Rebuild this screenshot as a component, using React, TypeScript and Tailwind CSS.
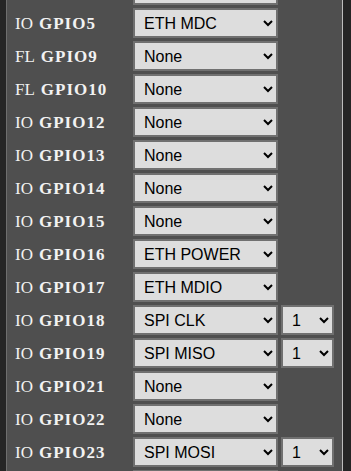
const rows: { type: string; gpio: string; value: string; index?: string; partial?: boolean }[] = [
  { type: "IO", gpio: "GPIO4", value: "None", partial: true },
  { type: "IO", gpio: "GPIO5", value: "ETH MDC" },
  { type: "FL", gpio: "GPIO9", value: "None" },
  { type: "FL", gpio: "GPIO10", value: "None" },
  { type: "IO", gpio: "GPIO12", value: "None" },
  { type: "IO", gpio: "GPIO13", value: "None" },
  { type: "IO", gpio: "GPIO14", value: "None" },
  { type: "IO", gpio: "GPIO15", value: "None" },
  { type: "IO", gpio: "GPIO16", value: "ETH POWER" },
  { type: "IO", gpio: "GPIO17", value: "ETH MDIO" },
  { type: "IO", gpio: "GPIO18", value: "SPI CLK", index: "1" },
  { type: "IO", gpio: "GPIO19", value: "SPI MISO", index: "1" },
  { type: "IO", gpio: "GPIO21", value: "None" },
  { type: "IO", gpio: "GPIO22", value: "None" },
  { type: "IO", gpio: "GPIO23", value: "SPI MOSI", index: "1" },
  { type: "IO", gpio: "GPIO25", value: "None", partial: true },
];

const selectClass =
  "h-[30px] bg-[#dddddd] text-black border-2 border-[#707070] pl-[5px] pr-[2px] text-[16px] leading-none font-['Liberation_Sans',Arial,sans-serif] rounded-none";

export default function App() {
  return (
    <div className="w-[351px] h-[471px] overflow-hidden bg-[#252525] flex">
      <div className="ml-[6px] w-[337px] h-full bg-[#4f4f4f] border-l border-l-[#6e6e6e] border-r border-r-[#bdbdbd] overflow-hidden">
        <div className="mt-[-25px] flex flex-col gap-[3px] pl-[8px]">
          {rows.map((r) => (
            <div key={r.gpio} className="flex items-center h-[30px]">
              <div className="w-[118px] shrink-0 pt-[2px] text-[17px] text-[#f2f2f2] font-['Liberation_Serif','Times_New_Roman',serif] whitespace-nowrap">
                {!r.partial && (
                  <>
                    {r.type}
                    <b className="ml-[6px] tracking-[1px]">{r.gpio}</b>
                  </>
                )}
              </div>
              {r.partial ? (
                <div className="h-[30px] w-[145px] bg-[#dddddd] border-2 border-[#707070]" />
              ) : (
                <select defaultValue={r.value} className={`${selectClass} w-[145px]`}>
                  <option>{r.value}</option>
                </select>
              )}
              {r.index && (
                <select defaultValue={r.index} className={`${selectClass} w-[53px] ml-[3px]`}>
                  <option>{r.index}</option>
                </select>
              )}
            </div>
          ))}
        </div>
      </div>
    </div>
  );
}
